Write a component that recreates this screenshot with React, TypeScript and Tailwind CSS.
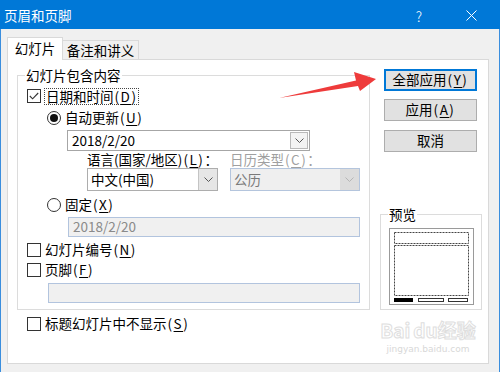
import React from "react";

function Check({ checked = false }: { checked?: boolean }) {
  return (
    <span className="flex h-[14px] w-[14px] shrink-0 items-center justify-center border border-[#333333] bg-white">
      {checked && (
        <svg width="10" height="8" viewBox="0 0 10 8">
          <polyline points="0.8,4 3.6,6.8 9.2,1" fill="none" stroke="#333" strokeWidth="1.1" />
        </svg>
      )}
    </span>
  );
}

function Radio({ checked = false }: { checked?: boolean }) {
  return (
    <span className="flex h-[14px] w-[14px] shrink-0 items-center justify-center rounded-full border border-[#333333] bg-white">
      {checked && <span className="h-[8px] w-[8px] rounded-full bg-[#111111]" />}
    </span>
  );
}

function Chevron({ color = "#555" }: { color?: string }) {
  return (
    <svg width="9" height="5" viewBox="0 0 9 5">
      <polyline points="0.5,0.5 4.5,4.5 8.5,0.5" fill="none" stroke={color} strokeWidth="1" />
    </svg>
  );
}

function M({ c }: { c: string }) {
  return (
    <span className="ml-[1px] tracking-[1.5px]">
      (<span className="underline underline-offset-2">{c}</span>)
    </span>
  );
}

export default function App() {
  return (
    <div className="relative h-[372px] w-[500px] overflow-hidden bg-[#f0f0f0] font-['Noto_Sans_CJK_SC','Noto_Sans',sans-serif] text-[13.5px] leading-none text-black">
      {/* title bar */}
      <div className="flex h-[29px] items-center bg-[#0078d7] text-white">
        <span className="pl-[4px] pt-[2px] text-[13.5px]">页眉和页脚</span>
        <div className="ml-auto flex items-center pt-[2px]">
          <span className="text-[14px] font-light">?</span>
          <svg className="ml-[44px] mr-[23px]" width="11" height="11" viewBox="0 0 11 11">
            <line x1="0.5" y1="0.5" x2="10.5" y2="10.5" stroke="#fff" strokeWidth="1" />
            <line x1="10.5" y1="0.5" x2="0.5" y2="10.5" stroke="#fff" strokeWidth="1" />
          </svg>
        </div>
      </div>

      {/* body */}
      <div className="h-[343px] border-x border-[#3a8ede] pl-[6px] pt-[8px]">
        {/* tabs */}
        <div className="flex h-[22px] items-end">
          <div className="relative z-10 -mb-px flex h-[23px] w-[56px] items-center justify-center border border-b-0 border-[#d9d9d9] bg-white pb-[1px]">
            幻灯片
          </div>
          <div className="flex h-[19px] w-[76px] items-center justify-center border border-b-0 border-l-0 border-[#d9d9d9] bg-[#f0f0f0] pt-[2px]">
            备注和讲义
          </div>
        </div>

        {/* panel */}
        <div className="flex h-[305px] w-[482px] flex-col border border-[#d9d9d9] bg-white">
          <div className="flex items-start pl-[9px]">
            {/* left group */}
            <div className="relative mt-[15px] flex h-[235px] w-[353px] flex-col border border-[#dcdcdc]">
              <span className="absolute left-[7px] top-[-8px] bg-white px-[1px] leading-[14px]">幻灯片包含内容</span>

              <div className="mt-[13px] flex h-[14px] items-center pl-[9px]">
                <Check checked />
                <span className="ml-[3px] border border-dotted border-[#444] px-px leading-[15px]">
                  日期和时间<M c="D" />
                </span>
              </div>

              <div className="mt-[8px] flex h-[14px] items-center pl-[29px]">
                <Radio checked />
                <span className="ml-[4px]">
                  自动更新<M c="U" />
                </span>
              </div>

              <div className="ml-[49px] mt-[5px] flex h-[21px] w-[243px] items-center border border-[#a6a6a6] bg-white pl-[4px]">
                <span>2018/2/20</span>
                <span className="ml-auto mr-px flex h-[17px] w-[18px] items-center justify-center border border-[#b9b9b9] bg-[#f3f3f3]">
                  <Chevron />
                </span>
              </div>

              <div className="ml-[69px] mt-[1px] flex h-[16px] items-center">
                <span className="w-[143px] whitespace-nowrap">
                  语言(国家/地区)<M c="L" />：
                </span>
                <span className="whitespace-nowrap text-[#a0a0a0]">
                  日历类型<M c="C" />：
                </span>
              </div>

              <div className="ml-[69px] flex h-[23px] items-stretch gap-[12px]">
                <div className="flex w-[131px] items-center border border-[#adadad] bg-white pl-[3px]">
                  <span>中文(中国)</span>
                  <span className="ml-auto flex h-full w-[19px] items-center justify-center border-l border-[#c4c4c4] bg-[#e6e6e6]">
                    <Chevron />
                  </span>
                </div>
                <div className="flex w-[130px] items-center border border-[#b4c5dd] bg-[#efefef] pl-[3px] text-[#7a7a7a]">
                  <span>公历</span>
                  <span className="ml-auto flex h-full w-[19px] items-center justify-center bg-[#dcdcdc]">
                    <Chevron color="#b5b5b5" />
                  </span>
                </div>
              </div>

              <div className="mt-[7px] flex h-[14px] items-center pl-[29px]">
                <Radio />
                <span className="ml-[4px]">
                  固定<M c="X" />
                </span>
              </div>

              <div className="ml-[50px] mt-[5px] flex h-[20px] w-[292px] items-center border border-[#b2c4de] bg-[#f0f0f0] pl-[4px] text-[#8a8a8a]">
                2018/2/20
              </div>

              <div className="mt-[6px] flex h-[14px] items-center pl-[9px]">
                <Check />
                <span className="ml-[4px]">
                  幻灯片编号<M c="N" />
                </span>
              </div>

              <div className="mt-[6px] flex h-[14px] items-center pl-[9px]">
                <Check />
                <span className="ml-[4px]">
                  页脚<M c="F" />
                </span>
              </div>

              <div className="ml-[30px] mt-[6px] h-[20px] w-[312px] border border-[#b2c4de] bg-[#f0f0f0]" />
            </div>

            {/* right column */}
            <div className="ml-[10px] flex w-[102px] flex-col">
              <div className="ml-[4px] mt-[9px] flex h-[22px] w-[93px] items-center justify-center border-2 border-[#0078d7] bg-[#e1e1e1]">
                全部应用<M c="Y" />
              </div>
              <div className="ml-[4px] mt-[8px] flex h-[22px] w-[93px] items-center justify-center border border-[#adadad] bg-[#e1e1e1]">
                应用<M c="A" />
              </div>
              <div className="ml-[4px] mt-[9px] flex h-[22px] w-[93px] items-center justify-center border border-[#adadad] bg-[#e1e1e1]">
                取消
              </div>

              <div className="relative mt-[62px] h-[96px] w-[102px] border border-[#dcdcdc]">
                <span className="absolute left-[7px] top-[-8px] bg-white px-[1px] leading-[14px]">预览</span>
                <svg className="ml-[8px] mt-[13px]" width="85" height="77" viewBox="0 0 85 77">
                  <rect x="0.5" y="0.5" width="84" height="76" fill="#fff" stroke="#9a9a9a" />
                  <rect x="5.5" y="4.5" width="74" height="11" fill="none" stroke="#444" strokeDasharray="2 1" />
                  <rect x="5.5" y="17.5" width="74" height="50" fill="none" stroke="#444" strokeDasharray="2 1" />
                  <rect x="5" y="70" width="19" height="4" fill="#000" />
                  <rect x="29.5" y="70.5" width="25" height="3" fill="#fff" stroke="#333" />
                  <rect x="59.5" y="70.5" width="19" height="3" fill="#fff" stroke="#333" />
                </svg>
              </div>
            </div>
          </div>

          <div className="mt-[7px] flex h-[14px] items-center pl-[19px]">
            <Check />
            <span className="ml-[4px]">
              标题幻灯片中不显示<M c="S" />
            </span>
          </div>
        </div>
      </div>

      {/* red arrow annotation */}
      <svg className="pointer-events-none absolute left-0 top-0" width="500" height="372" viewBox="0 0 500 372">
        <polygon points="279,98 356,80.5 354,72 376,79 360,91 358,86" fill="#ee3b3b" />
      </svg>

      {/* watermark */}
      <div className="pointer-events-none absolute left-[383px] top-[318px] flex w-[90px] flex-col items-center text-white">
        <span className="whitespace-nowrap text-[19px] font-bold leading-[24px] [-webkit-text-stroke:1px_#dedede]">
          Bai<span className="ml-[3px]">du</span>经验
        </span>
        <span className="mt-[3px] whitespace-nowrap font-['DejaVu_Sans',sans-serif] text-[9px] text-[#d8d8d8]">
          jingyan.baidu.com
        </span>
      </div>
    </div>
  );
}
